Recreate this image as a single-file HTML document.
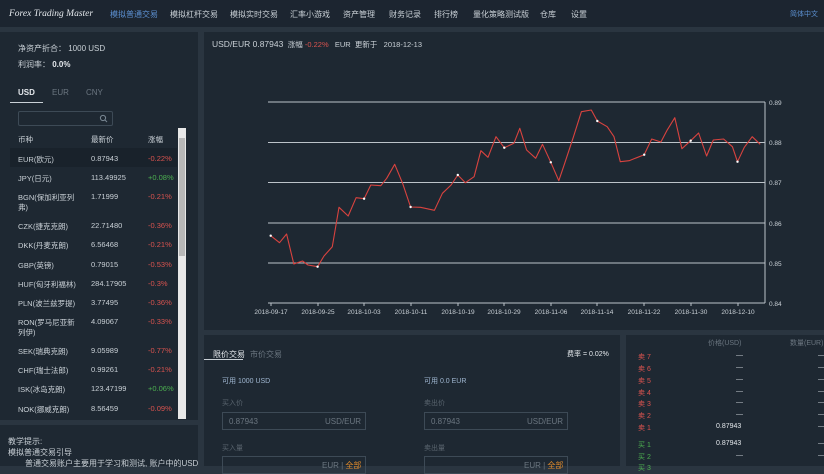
<!DOCTYPE html>
<html><head><meta charset="utf-8"><style>
*{margin:0;padding:0;box-sizing:border-box}
body{width:824px;height:466px;overflow:hidden;background:#2a3540;font-family:"Liberation Sans","Noto Sans CJK SC",sans-serif;font-size:8px;color:#c9d0d6;position:relative}
.a{position:absolute;white-space:nowrap}
.p{position:absolute;background:#1e2832}
.r{color:#d9534f}.g{color:#4caf50}
</style></head><body>
<div class="p" style="left:0;top:0;width:824px;height:27px;background:#1c2530"></div>
<div class="a" style="left:9px;top:9px;font-family:'Liberation Serif',serif;font-style:italic;font-size:9.5px;color:#e4e8ec">Forex Trading Master</div>
<div class="a" style="left:110px;top:9px;color:#5b8fd0">模拟普通交易</div>
<div class="a" style="left:170px;top:9px">模拟杠杆交易</div>
<div class="a" style="left:230px;top:9px">模拟实时交易</div>
<div class="a" style="left:290px;top:9px">汇率小游戏</div>
<div class="a" style="left:343px;top:9px">资产管理</div>
<div class="a" style="left:389px;top:9px">财务记录</div>
<div class="a" style="left:434px;top:9px">排行榜</div>
<div class="a" style="left:473px;top:9px">量化策略测试版</div>
<div class="a" style="left:540px;top:9px">仓库</div>
<div class="a" style="left:571px;top:9px">设置</div>
<div class="a" style="left:790px;top:9px;color:#5b8fd0;font-size:7px">简体中文</div>

<div class="p" style="left:0;top:32px;width:198px;height:388px"></div>
<div class="a" style="left:18px;top:43px">净资产折合： 1000 USD</div>
<div class="a" style="left:18px;top:59px">利润率： <b style="color:#e4e8ec">0.0%</b></div>
<div class="a" style="left:18px;top:88px;color:#e4e8ec;font-weight:bold">USD</div>
<div class="a" style="left:52px;top:88px;color:#6b7680">EUR</div>
<div class="a" style="left:86px;top:88px;color:#6b7680">CNY</div>
<div class="a" style="left:10px;top:102px;width:33px;height:1px;background:#c9d0d6"></div>
<div class="a" style="left:18px;top:111px;width:95px;height:15px;border:1px solid #3d4a56;border-radius:2px"></div>
<svg class="a" style="left:99px;top:114px" width="9" height="9"><circle cx="4" cy="4" r="2.6" fill="none" stroke="#7a8894" stroke-width="1"/><line x1="6" y1="6" x2="8" y2="8" stroke="#7a8894"/></svg>
<div class="a" style="left:178px;top:128px;width:8px;height:291px;background:#e8e8e8"></div>
<div class="a" style="left:179px;top:138px;width:6px;height:118px;background:#b8b8b8"></div>
<div class="a" style="left:10px;top:148px;width:167px;height:19px;background:#19222b"></div>
<div style="position:absolute;left:0;top:0;font-size:7.5px">
<div class="a" style="left:18px;top:134px">币种</div><div class="a" style="left:91px;top:134px">最新价</div><div class="a" style="left:148px;top:134px">涨幅</div>
<div class="a" style="left:18px;top:154px">EUR(欧元)</div><div class="a" style="left:91px;top:154px">0.87943</div><div class="a r" style="left:148px;top:154px">-0.22%</div>
<div class="a" style="left:18px;top:173px">JPY(日元)</div><div class="a" style="left:91px;top:173px">113.49925</div><div class="a g" style="left:148px;top:173px">+0.08%</div>
<div class="a" style="left:18px;top:192px">BGN(保加利亚列</div><div class="a" style="left:18px;top:202px">弗)</div><div class="a" style="left:91px;top:192px">1.71999</div><div class="a r" style="left:148px;top:192px">-0.21%</div>
<div class="a" style="left:18px;top:221px">CZK(捷克克朗)</div><div class="a" style="left:91px;top:221px">22.71480</div><div class="a r" style="left:148px;top:221px">-0.36%</div>
<div class="a" style="left:18px;top:240px">DKK(丹麦克朗)</div><div class="a" style="left:91px;top:240px">6.56468</div><div class="a r" style="left:148px;top:240px">-0.21%</div>
<div class="a" style="left:18px;top:260px">GBP(英镑)</div><div class="a" style="left:91px;top:260px">0.79015</div><div class="a r" style="left:148px;top:260px">-0.53%</div>
<div class="a" style="left:18px;top:279px">HUF(匈牙利福林)</div><div class="a" style="left:91px;top:279px">284.17905</div><div class="a r" style="left:148px;top:279px">-0.3%</div>
<div class="a" style="left:18px;top:298px">PLN(波兰兹罗提)</div><div class="a" style="left:91px;top:298px">3.77495</div><div class="a r" style="left:148px;top:298px">-0.36%</div>
<div class="a" style="left:18px;top:317px">RON(罗马尼亚新</div><div class="a" style="left:18px;top:327px">列伊)</div><div class="a" style="left:91px;top:317px">4.09067</div><div class="a r" style="left:148px;top:317px">-0.33%</div>
<div class="a" style="left:18px;top:346px">SEK(瑞典克朗)</div><div class="a" style="left:91px;top:346px">9.05989</div><div class="a r" style="left:148px;top:346px">-0.77%</div>
<div class="a" style="left:18px;top:365px">CHF(瑞士法郎)</div><div class="a" style="left:91px;top:365px">0.99261</div><div class="a r" style="left:148px;top:365px">-0.21%</div>
<div class="a" style="left:18px;top:384px">ISK(冰岛克朗)</div><div class="a" style="left:91px;top:384px">123.47199</div><div class="a g" style="left:148px;top:384px">+0.06%</div>
<div class="a" style="left:18px;top:404px">NOK(挪威克朗)</div><div class="a" style="left:91px;top:404px">8.56459</div><div class="a r" style="left:148px;top:404px">-0.09%</div>
</div>
<div class="p" style="left:0;top:425px;width:198px;height:41px"></div>
<div class="a" style="left:8px;top:436px">教学提示:</div>
<div class="a" style="left:8px;top:447px">模拟普通交易引导</div>
<div class="a" style="left:25px;top:458px">普通交易账户主要用于学习和测试, 账户中的USD</div>

<div class="p" style="left:204px;top:32px;width:620px;height:298px"></div>
<div class="a" style="left:212px;top:39px;font-size:8.5px">USD/EUR 0.87943 <span style="font-size:7.5px">&nbsp;涨幅 <span class="r">-0.22%</span> &nbsp; EUR &nbsp;更新于 &nbsp; 2018-12-13</span></div>
<svg class="a" style="left:0;top:0" width="824" height="330">
<g stroke="#bcc3c9" stroke-width="1">
<line x1="268" y1="102" x2="765" y2="102"/><line x1="268" y1="142.5" x2="765" y2="142.5"/><line x1="268" y1="182.5" x2="765" y2="182.5"/><line x1="268" y1="223" x2="765" y2="223"/><line x1="268" y1="263" x2="765" y2="263"/><line x1="268" y1="303" x2="765" y2="303"/>
<line x1="765" y1="102" x2="765" y2="303"/>
<line x1="271" y1="303" x2="271" y2="306"/><line x1="318" y1="303" x2="318" y2="306"/><line x1="364" y1="303" x2="364" y2="306"/><line x1="411" y1="303" x2="411" y2="306"/><line x1="458" y1="303" x2="458" y2="306"/><line x1="504" y1="303" x2="504" y2="306"/><line x1="551" y1="303" x2="551" y2="306"/><line x1="597" y1="303" x2="597" y2="306"/><line x1="644" y1="303" x2="644" y2="306"/><line x1="691" y1="303" x2="691" y2="306"/><line x1="738" y1="303" x2="738" y2="306"/>
</g>
<g fill="#c9d0d6" font-size="6.5" font-family="Liberation Sans,sans-serif">
<text x="769" y="105">0.89</text><text x="769" y="145">0.88</text><text x="769" y="185">0.87</text><text x="769" y="226">0.86</text><text x="769" y="266">0.85</text><text x="769" y="306">0.84</text>
<g text-anchor="middle"><text x="271" y="314">2018-09-17</text><text x="318" y="314">2018-09-25</text><text x="364" y="314">2018-10-03</text><text x="411" y="314">2018-10-11</text><text x="458" y="314">2018-10-19</text><text x="504" y="314">2018-10-29</text><text x="551" y="314">2018-11-06</text><text x="597" y="314">2018-11-14</text><text x="644" y="314">2018-11-22</text><text x="691" y="314">2018-11-30</text><text x="738" y="314">2018-12-10</text></g>
</g>
<polyline fill="none" stroke="#d9433f" stroke-width="1.1" stroke-linejoin="round" points="270.7,235.7 279.5,242.7 286.6,234 293.8,264 302.5,261 308,265 317.6,266.7 324,256 332.3,246.7 339,207.3 348.2,216 356.1,197.7 364.1,198.7 370.8,185 380.8,185.7 386.7,178.3 394.7,164.3 402.6,183.3 410.6,207 420.5,207.3 434.4,210.3 442.4,193.3 451.1,185 457.8,175 465.4,182.7 474.1,176.7 480.9,150.7 488,157.3 496,136.7 504.3,147.7 513.9,143.3 519.8,128.3 526.6,150 535.7,158.3 542.5,144.3 550.8,162.3 558.8,180.7 564.7,163.3 573.5,136.7 581.4,111.7 591.3,110 597.3,121 607.2,126.7 614,136.7 620.3,161.7 629.1,160.7 644.2,154.7 651.7,139 660.9,142 666.8,130.7 674.8,117.7 681.9,148.7 690.7,140.7 698.6,133 706.6,156 713.3,140 723.6,139 732.4,146.7 737.5,161.7 744.3,147.3 752.2,136.7 760.2,144.3"/>
<g fill="#fff"><circle cx="270.7" cy="235.7" r="1.2"/><circle cx="317.6" cy="266.7" r="1.2"/><circle cx="364.1" cy="198.7" r="1.2"/><circle cx="410.6" cy="207" r="1.2"/><circle cx="457.8" cy="175" r="1.2"/><circle cx="504.3" cy="147.7" r="1.2"/><circle cx="550.8" cy="162.3" r="1.2"/><circle cx="597.3" cy="121" r="1.2"/><circle cx="644.2" cy="154.7" r="1.2"/><circle cx="690.7" cy="140.7" r="1.2"/><circle cx="737.5" cy="161.7" r="1.2"/></g>
</svg>

<div class="p" style="left:204px;top:335px;width:416px;height:131px"></div>
<div class="a" style="left:213px;top:349px;color:#e4e8ec">限价交易</div>
<div class="a" style="left:250px;top:349px;color:#6b7680">市价交易</div>
<div class="a" style="left:204px;top:359px;width:39px;height:1px;background:#c9d0d6"></div>
<div class="a" style="left:567px;top:349px;font-size:7px;color:#e4e8ec">费率 = 0.02%</div>
<div class="a" style="left:222px;top:376px;font-size:7px;color:#9fb6d0">可用 1000 USD</div>
<div class="a" style="left:424px;top:376px;font-size:7px;color:#9fb6d0">可用 0.0 EUR</div>
<div class="a" style="left:222px;top:398px;font-size:7px;color:#59646e">买入价</div>
<div class="a" style="left:424px;top:398px;font-size:7px;color:#59646e">卖出价</div>
<div class="a" style="left:222px;top:412px;width:144px;height:18px;border:1px solid #3d4a56"></div>
<div class="a" style="left:424px;top:412px;width:144px;height:18px;border:1px solid #3d4a56"></div>
<div class="a" style="left:229px;top:417px;color:#6b7680">0.87943</div><div class="a" style="left:325px;top:417px;color:#6b7680">USD/EUR</div>
<div class="a" style="left:431px;top:417px;color:#6b7680">0.87943</div><div class="a" style="left:527px;top:417px;color:#6b7680">USD/EUR</div>
<div class="a" style="left:222px;top:443px;font-size:7px;color:#59646e">买入量</div>
<div class="a" style="left:424px;top:443px;font-size:7px;color:#59646e">卖出量</div>
<div class="a" style="left:222px;top:456px;width:144px;height:18px;border:1px solid #3d4a56"></div>
<div class="a" style="left:424px;top:456px;width:144px;height:18px;border:1px solid #3d4a56"></div>
<div class="a" style="left:322px;top:460px;color:#6b7680">EUR | <span style="color:#e08a2b">全部</span></div>
<div class="a" style="left:524px;top:460px;color:#6b7680">EUR | <span style="color:#e08a2b">全部</span></div>

<div class="p" style="left:626px;top:335px;width:198px;height:131px"></div>
<div style="position:absolute;left:0;top:0;font-size:7px">
<div class="a" style="left:708px;top:338px;color:#6b7680">价格(USD)</div><div class="a" style="left:790px;top:338px;color:#6b7680">数量(EUR)</div>
<div class="a r" style="left:638px;top:352px">卖 7</div><div class="a r" style="left:638px;top:364px">卖 6</div><div class="a r" style="left:638px;top:376px">卖 5</div><div class="a r" style="left:638px;top:388px">卖 4</div><div class="a r" style="left:638px;top:399px">卖 3</div><div class="a r" style="left:638px;top:411px">卖 2</div><div class="a r" style="left:638px;top:423px">卖 1</div>
<div class="a g" style="left:638px;top:440px">买 1</div><div class="a g" style="left:638px;top:452px">买 2</div><div class="a g" style="left:638px;top:463px">买 3</div>
<div class="a" style="left:736px;top:352px">—</div><div class="a" style="left:736px;top:364px">—</div><div class="a" style="left:736px;top:376px">—</div><div class="a" style="left:736px;top:388px">—</div><div class="a" style="left:736px;top:399px">—</div><div class="a" style="left:736px;top:411px">—</div>
<div class="a" style="left:716px;top:423px;color:#e4e8ec">0.87943</div><div class="a" style="left:716px;top:440px;color:#e4e8ec">0.87943</div><div class="a" style="left:736px;top:452px">—</div>
<div class="a" style="left:818px;top:352px">—</div><div class="a" style="left:818px;top:364px">—</div><div class="a" style="left:818px;top:376px">—</div><div class="a" style="left:818px;top:388px">—</div><div class="a" style="left:818px;top:399px">—</div><div class="a" style="left:818px;top:411px">—</div><div class="a" style="left:818px;top:423px">—</div><div class="a" style="left:818px;top:440px">—</div><div class="a" style="left:818px;top:452px">—</div>
</div>
</body></html>
